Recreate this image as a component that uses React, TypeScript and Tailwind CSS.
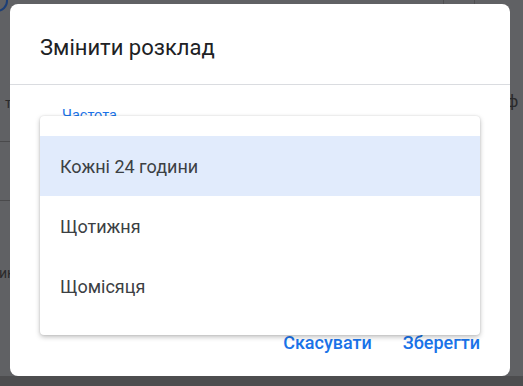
const options = ["Кожні 24 години", "Щотижня", "Щомісяця"]

export default function App() {
  return (
    <div className="relative w-[523px] h-[386px] overflow-hidden bg-[#606164] font-['Roboto',sans-serif]">
      {/* page behind the scrim */}
      <div className="absolute left-[-14px] top-[-10px] w-[22px] h-[22px] rounded-full border-2 border-[#1c3f77]" />
      <div className="absolute left-[5px] top-[93px] text-[14px] text-[#2a2a2b]">т</div>
      <div className="absolute left-0 top-[141px] w-[10px] h-px bg-[#4a4a4c]" />
      <div className="absolute left-0 top-[200px] w-[10px] h-px bg-[#4a4a4c]" />
      <div className="absolute left-[-1px] top-[263px] text-[14px] text-[#2a2a2b]">ик</div>
      <div className="absolute left-[506px] top-[89px] text-[17px] text-[#2a2a2b]">ф</div>
      <div className="absolute left-[443px] top-0 w-px h-[4px] bg-[#4f4f51]" />
      <div className="absolute left-[474px] top-0 w-px h-[4px] bg-[#4f4f51]" />
      <div className="absolute left-0 bottom-0 w-full h-[10px] bg-[#4d4d4f]" />

      {/* dialog */}
      <div className="absolute left-[10px] top-[4px] w-[500px] h-[372px] rounded-[8px] bg-white flex flex-col">
        <div className="h-[81px] px-[30px] flex items-center border-b border-[#dadce0]">
          <span className="text-[22px] text-[#202124] leading-none mt-[8px]">Змінити розклад</span>
        </div>
        <div className="flex-1 pl-[52px] pt-[24px]">
          <div className="text-[14.5px] leading-none text-[#1a73e8]">Частота</div>
        </div>
        <div className="flex justify-end gap-[31px] pr-[30px] pb-[20px] text-[18px] font-medium text-[#1a73e8]">
          <span>Скасувати</span>
          <span>Зберегти</span>
        </div>
      </div>

      {/* dropdown menu */}
      <div className="absolute left-[40px] top-[116px] w-[440px] h-[219px] rounded-[4px] bg-white pt-[20px] shadow-[0_2px_5px_rgba(0,0,0,0.25),0_0_2px_rgba(0,0,0,0.12)]">
        {options.map((o, i) => (
          <div
            key={o}
            className={`h-[60px] flex items-center pl-[20px] text-[18px] text-[#3c4043] ${i === 0 ? "bg-[#e1ebfc]" : ""}`}
          >
            {o}
          </div>
        ))}
      </div>
    </div>
  )
}
